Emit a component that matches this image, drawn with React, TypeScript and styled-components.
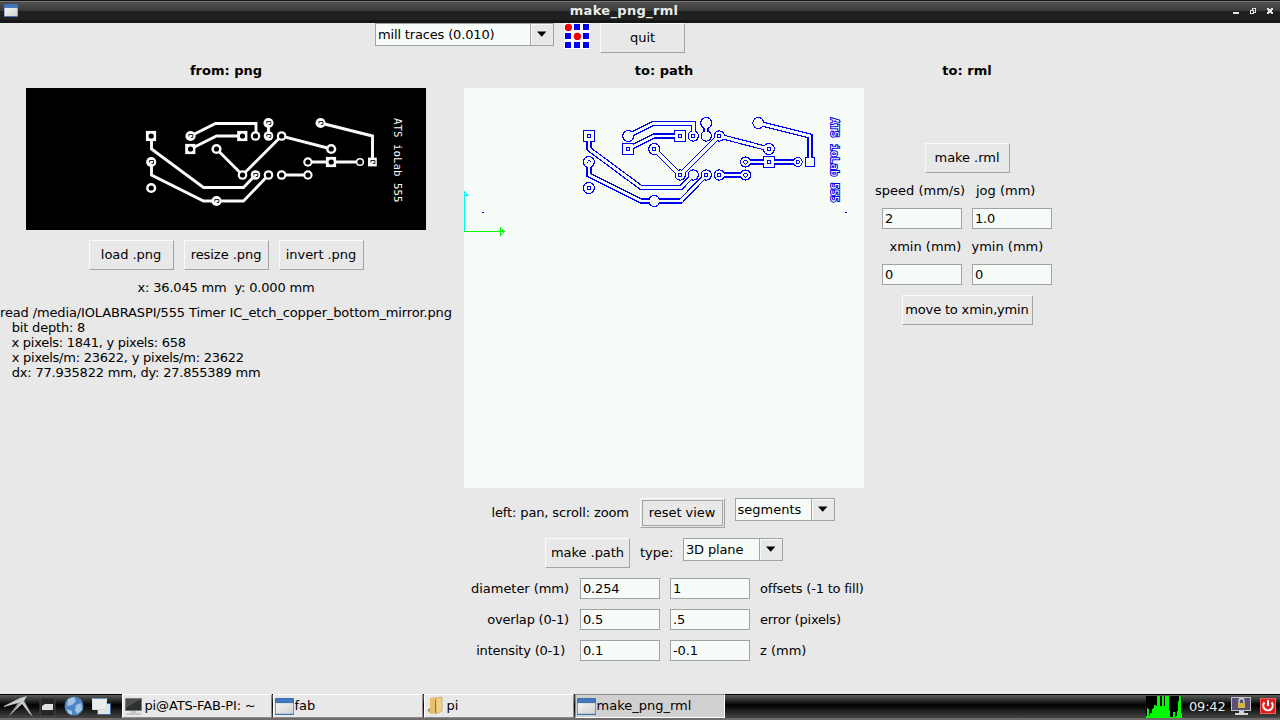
import React from "react";
import styled, { createGlobalStyle } from "styled-components";

const Global = createGlobalStyle`
  * { box-sizing: border-box; }
  body { margin: 0; background: #e8e8e8; overflow: hidden; }
`;
const Screen = styled.div`
  width: 1280px; height: 720px; display: flex; flex-direction: column;
  background: #e8e8e8; color: #000; font: 13px/15px "DejaVu Sans", sans-serif;
`;
const TitleBar = styled.header`
  height: 23px; flex: none; display: grid; grid-template-columns: 60px 1fr 92px; align-items: center;
  background: linear-gradient(#141414 0 1px, #777 1px 2px, #505050 2px, #3a3a3a 11px, #202020 11px, #202020 20px, #161616 20px);
`;
const WindowIcon = styled.svg<{ $w: number; $h: number }>`
  display: block; flex: none; width: ${(p) => p.$w}px; height: ${(p) => p.$h}px;
`;
const TitleSlot = styled.div`padding: 0 0 2px 4px;`;
const TitleText = styled.div`
  color: #e8ecea; font-weight: bold; text-align: center; letter-spacing: 0.32px; padding-bottom: 2px;
`;
const WindowControls = styled.svg`display: block; width: 60px; height: 23px; margin-left: 32px;`;
const Toolbar = styled.div`
  height: 37px; flex: none; display: flex; align-items: flex-start; gap: 10px; padding-left: 375px;
`;
const Button = styled.div<{ $w?: number; $focus?: boolean; $track?: number }>`
  width: ${(p) => p.$w ?? 85}px; height: 30px; flex: none; padding-bottom: 2px;
  display: flex; align-items: center; justify-content: center; white-space: nowrap;
  letter-spacing: ${(p) => p.$track ?? -0.05}px;
  border: 1px solid; border-color: #f8fcf8 #a0a4a2 #a0a4a2 #f8fcf8;
  ${(p) => p.$focus && "outline: 1px solid #a0a4a2; outline-offset: -3px;"}
`;
const ComboBox = styled.div<{ $w: number }>`
  width: ${(p) => p.$w}px; height: 23px; flex: none; display: flex; border: 1px solid #a0a4a2;
`;
const ComboValue = styled.div<{ $track: number }>`
  flex: 1; background: #f8fcf8; padding: 3px 2px; border-right: 1px solid #a0a4a2;
  letter-spacing: ${(p) => p.$track}px;
`;
const ComboArrow = styled.div`
  width: 22px; padding: 6px 0 0 5px; border: 1px solid #f8fcf8; border-width: 1px 0 0 1px;
`;
const Columns = styled.main`height: 634px; flex: none; display: flex;`;
const Column = styled.section<{ $w: number }>`
  width: ${(p) => p.$w}px; flex: none; display: flex; flex-direction: column; align-items: center;
`;
const Heading = styled.h2`
  margin: 0; height: 28px; padding: 3px 0 0; font: bold 13px/15px "DejaVu Sans", sans-serif;
`;
const Board = styled.svg`display: block; flex: none; width: 400px;`;
const Row = styled.div<{ $top?: number; $gap?: number }>`
  display: flex; gap: ${(p) => p.$gap ?? 10}px; margin-top: ${(p) => p.$top ?? 10}px;
`;
const ViewRow = styled(Row)`padding-right: 2px;`;
const Text = styled.div<{ $top?: number; $track?: number; $w?: number }>`
  white-space: pre; padding-top: ${(p) => p.$top ?? 0}px; letter-spacing: ${(p) => p.$track ?? 0}px;
  ${(p) => p.$w && `width: ${p.$w}px;`}
`;
const Report = styled.div`width: 452px; margin-top: 10px;`;
const Field = styled.div`
  width: 80px; height: 21px; padding: 2px 2px; border: 1px solid #a0a4a2; background: #f8fcf8;
  letter-spacing: -0.15px;
`;
const Params = styled.div`
  width: 412px; margin-top: 10px; display: grid; grid-template-columns: 105px 80px 80px 1fr;
  grid-auto-rows: 21px; gap: 10px; align-items: center; margin-left: 14px;
`;
const RightLabel = styled.div<{ $track: number }>`
  text-align: right; white-space: pre; padding-right: 1px; letter-spacing: ${(p) => p.$track}px;
`;
const Taskbar = styled.footer`
  height: 26px; flex: none; display: flex; align-items: flex-start;
  background: linear-gradient(#000 0 1px, #5a5c5a 1px, #303230 6px, #000 11px, #0a0c0a 13px, #444644 24px, #706c6c 24px);
`;
const Launchers = styled.svg`width: 122px; height: 26px; display: block; flex: none;`;
const Task = styled.div<{ $active?: boolean }>`
  width: 150px; height: 24px; margin-right: 1px; flex: none; display: flex; align-items: center;
  padding-left: 1px; border: 1px solid; border-color: #fff #8c8c8c #8c8c8c #fff;
  background: #e8e8e8;
  ${(p) => p.$active && "background: #d0d0d0; border-color: #8c8c8c #fff #fff #8c8c8c;"}
`;
const TaskLabel = styled.span<{ $track?: number }>`
  padding: 0 0 1px 0.5px; letter-spacing: ${(p) => p.$track ?? 0}px;
`;
const Tray = styled.div`margin-left: auto; display: flex; height: 24px; color: #e8ecea;`;
const Clock = styled.div`width: 43px; padding: 5px 0 0 7px; white-space: nowrap; letter-spacing: -0.2px;`;
const TraySvg = styled.svg`display: block; flex: none;`;

type Pad = { x: number; y: number; r: number; square?: boolean; hole: boolean };
const pads: Pad[] = [
  { x: 151, y: 136, r: 5, square: true, hole: true },
  { x: 190.3, y: 149, r: 5, square: true, hole: true },
  { x: 242.3, y: 136, r: 5, square: true, hole: true },
  { x: 331, y: 162, r: 5, square: true, hole: true },
  { x: 372.4, y: 162, r: 4.3, square: true, hole: false },
  { x: 190.3, y: 136, r: 5, hole: false },
  { x: 216.3, y: 149, r: 5, hole: true },
  { x: 151, y: 162, r: 5, hole: false },
  { x: 151, y: 188, r: 5, hole: true },
  { x: 216.3, y: 201, r: 5, hole: false },
  { x: 242.3, y: 175, r: 4.7, hole: true },
  { x: 255.3, y: 175, r: 4.7, hole: false },
  { x: 268.3, y: 175, r: 4.7, hole: true },
  { x: 281.4, y: 175, r: 4.7, hole: true },
  { x: 255.3, y: 136, r: 4.7, hole: true },
  { x: 268.3, y: 136, r: 4.7, hole: false },
  { x: 268.3, y: 123, r: 5, hole: false },
  { x: 281.4, y: 136, r: 4.7, hole: true },
  { x: 320.4, y: 123, r: 5, hole: false },
  { x: 331, y: 149, r: 5, hole: true },
  { x: 307.7, y: 162, r: 4.6, hole: true },
  { x: 359.8, y: 162, r: 4, hole: true },
  { x: 307.7, y: 175, r: 4.6, hole: true },
];
const traces =
  "M151 136V149L203 187.5H243L255 175M151 162V175L203 201H243L268 175M190 136L215 123.5H255.5V136" +
  "M190 149L216 136H242M216 149L242 175L281 136L331 149M320 123L372 136V162M268 123V136M307 162H360M281 175H307";

const PadShape = ({ pad, grow, fill }: { pad: Pad; grow: number; fill: string }) => {
  const r = pad.r + grow;
  return pad.square ? (
    <rect x={pad.x - r} y={pad.y - r} width={r * 2} height={r * 2} fill={fill} />
  ) : (
    <circle cx={pad.x + 0.2} cy={pad.y} r={r} fill={fill} />
  );
};

const SourceBoard = () => (
  <Board viewBox="26 88 400 142" height={142}>
    <rect x="26" y="88" width="400" height="142" fill="#000" />
    <path d={traces} transform="translate(.5 0)" fill="none" stroke="#f8fcf8" strokeWidth="2.9" />
    {pads.map((p, i) => (
      <g key={i}>
        <PadShape pad={p} grow={0.1} fill="#f8fcf8" />
        {p.hole ? (
          <circle cx={p.x + 0.2} cy={p.y} r="2.6" fill="#000" />
        ) : (
          <path d={`M${p.x - 1.5} ${p.y + 0.5}v-2h4v3h-2`} fill="none" stroke="#222" strokeWidth="1" />
        )}
      </g>
    ))}
    <text transform="translate(393.5 118) rotate(90)" fontFamily="DejaVu Sans Mono, monospace" fontSize="10.8" fill="#f8fcf8">
      ATS ioLab 555
    </text>
  </Board>
);

const PathBoard = () => (
  <Board viewBox="464 88 400 400" height={400} shapeRendering="crispEdges">
    <rect x="464" y="88" width="400" height="400" fill="#f8fcf8" />
    <g transform="translate(437.7 0)">
      <path d={traces} transform="translate(.3 0)" fill="none" stroke="#0000f0" strokeWidth="5.2" />
      {pads.map((p, i) => <PadShape key={i} pad={p} grow={1} fill="#0000f0" />)}
      <path d={traces} transform="translate(.3 0)" fill="none" stroke="#f8fcf8" strokeWidth="2.9" />
      {pads.map((p, i) => <PadShape key={i} pad={p} grow={-0.1} fill="#f8fcf8" />)}
      {pads.filter((p) => p.hole).map((p, i) => (
        <ellipse key={i} cx={p.x + 0.1} cy={p.y} rx="1.7" ry="2" fill="none" stroke="#0000f0" strokeWidth="1" />
      ))}
      <path d="M149.500 162.500h1M152.500 161.500h1M150.500 160.500h2" stroke="#0000f0" />
    </g>
    <text transform="translate(831.3 118) rotate(90)" fontFamily="DejaVu Sans Mono, monospace" fontSize="10.8"
      fill="#f8fcf8" stroke="#0000f0" strokeWidth="2" paintOrder="stroke">
      ATS ioLab 555
    </text>
    <path d="M482 212.500h2M845 212.500h2" stroke="#0000f0" />
    <path d="M464.500 231V191.500L468 195.500H464" fill="none" stroke="#00f8f8" />
    <path d="M464 231.500H504L500.500 227.500V235.500L504.500 231.500" fill="none" stroke="#00f800" />
  </Board>
);

const AppWindowIcon = ({ w, h }: { w: number; h: number }) => (
  <WindowIcon $w={w} $h={h} viewBox="0 0 20 20" preserveAspectRatio="none">
    <defs>
      <linearGradient id="pane" x1="0" y1="0" x2="1" y2="1">
        <stop offset="0" stopColor="#f4f4f2" />
        <stop offset="1" stopColor="#cfd2d0" />
      </linearGradient>
    </defs>
    <rect x="0" y="0" width="20" height="20" rx="1" fill="#3f70b0" />
    <rect x="0.7" y="6" width="18.6" height="12.6" fill="url(#pane)" />
    <rect x="1" y="1" width="18" height="4" fill="#4478bc" />
  </WindowIcon>
);

const TerminalIcon = () => (
  <WindowIcon $w={20} $h={20} viewBox="0 0 20 20">
    <rect x="1" y="2" width="17" height="13" rx="1" fill="#777" />
    <rect x="2" y="3" width="15" height="11" fill="#2c302e" />
    <path d="M2 3h15L2 12z" fill="#4b4f4d" />
    <path d="M7 15h5v2H7zM3 17h14v2H3z" fill="#c4c4c4" />
  </WindowIcon>
);
const FolderIcon = () => (
  <WindowIcon $w={20} $h={20} viewBox="0 0 20 20">
    <path d="M1 14l4 4 3-1V9z" fill="#999" />
    <path d="M4 2l6-1v16l-6 1z" fill="#e8bd6c" />
    <path d="M10 2l6-1v14l-6 3z" fill="#f1d08d" stroke="#c89b4b" strokeWidth=".7" />
    <path d="M9.500 4v13" stroke="#9c7430" strokeWidth="1" />
  </WindowIcon>
);

const Combo = ({ value, width, track = 0 }: { value: string; width: number; track?: number }) => (
  <ComboBox $w={width}>
    <ComboValue $track={track}>{value}</ComboValue>
    <ComboArrow>
      <svg width="10" height="6" viewBox="0 0 10 6" display="block"><path d="M0 0.500h9.400L4.700 5.800z" fill="#000" /></svg>
    </ComboArrow>
  </ComboBox>
);

const FabLogo = () => (
  <svg width="26" height="26" viewBox="0 0 26 26">
    <rect width="26" height="26" fill="#fff" />
    {[0, 1, 2].flatMap((r) =>
      [0, 1, 2].map((c) =>
        r === c && r < 2 ? (
          <circle key={`${r}${c}`} cx={4.4 + c * 9} cy={4.4 + r * 9} r="3.6" fill="#f00000" />
        ) : (
          <rect key={`${r}${c}`} x={1 + c * 9} y={1 + r * 9} width="6" height="6" fill="#0000f8" />
        ),
      ),
    )}
  </svg>
);

const report: [string, number][] = [
  ["read /media/IOLABRASPI/555 Timer IC_etch_copper_bottom_mirror.png", -0.138],
  ["   bit depth: 8", -0.2],
  ["   x pixels: 1841, y pixels: 658", -0.27],
  ["   x pixels/m: 23622, y pixels/m: 23622", -0.24],
  ["   dx: 77.935822 mm, dy: 27.855389 mm", -0.21],
];

const params: [string, string, string, string, number, number][] = [
  ["diameter (mm)", "0.254", "1", "offsets (-1 to fill)", -0.05, -0.2],
  ["overlap (0-1)", "0.5", ".5", "error (pixels)", -0.2, -0.18],
  ["intensity (0-1) ", "0.1", "-0.1", "z (mm)", -0.2, 0],
];

const cpu = [2, 10, 9, 2, 5, 5, 9, 10, 13, 13, 12, 22, 22, 22, 12, 12, 22, 22, 12, 22, 22, 22, 22, 8, 1, 1, 1, 6, 6, 1, 2, 7, 17, 22, 22, 5];

export default function App() {
  return (
    <Screen>
      <Global />
      <TitleBar>
        <TitleSlot><AppWindowIcon w={14} h={13} /></TitleSlot>
        <TitleText>make_png_rml</TitleText>
        <WindowControls viewBox="0 0 60 23" fill="none" stroke="#e0e4e2" shapeRendering="crispEdges">
          <path d="M13 13h6" strokeWidth="2" />
          <path d="M32.500 10V8.500h3v4h-1.500M30.500 10.500h3v3h-3z" strokeWidth="1" />
          <path d="M47 8h2v1h2V8h2v2h-1v2h1v2h-2v-1h-2v1h-2v-2h1v-2h-1z" fill="#e0e4e2" stroke="none" />
        </WindowControls>
      </TitleBar>
      <Toolbar>
        <Combo value="mill traces (0.010)" width={179} track={-0.16} />
        <FabLogo />
        <Button>quit</Button>
      </Toolbar>
      <Columns>
        <Column $w={452}>
          <Heading>from: png</Heading>
          <SourceBoard />
          <Row><Button>load .png</Button><Button>resize .png</Button><Button>invert .png</Button></Row>
          <Text $top={10} $track={-0.18}>x: 36.045 mm  y: 0.000 mm</Text>
          <Report>
            {report.map(([line, track]) => <Text key={line} $track={track}>{line}</Text>)}
          </Report>
        </Column>
        <Column $w={424}>
          <Heading>to: path</Heading>
          <PathBoard />
          <ViewRow>
            <Text $top={7} $track={-0.13} $w={138}>left: pan, scroll: zoom</Text>
            <Button $focus>reset view</Button>
            <Combo value="segments" width={100} />
          </ViewRow>
          <Row>
            <Button>make .path</Button>
            <Text $top={7} $w={33}>type:</Text>
            <Combo value="3D plane" width={100} track={-0.15} />
          </Row>
          <Params>
            {params.map(([left, a, b, right, leftTrack, rightTrack]) => (
              <React.Fragment key={left}>
                <RightLabel $track={leftTrack}>{left}</RightLabel>
                <Field>{a}</Field>
                <Field>{b}</Field>
                <Text $track={rightTrack}>{right}</Text>
              </React.Fragment>
            ))}
          </Params>
        </Column>
        <Column $w={182}>
          <Heading>to: rml</Heading>
          <Row $top={55}><Button>make .rml</Button></Row>
          <Row><Text $w={91}>speed (mm/s)</Text><Text $w={83}>jog (mm)</Text></Row>
          <Row><Field>2</Field><Field>1.0</Field></Row>
          <Row><Text $w={72}>xmin (mm)</Text><Text $w={73}>ymin (mm)</Text></Row>
          <Row><Field>0</Field><Field>0</Field></Row>
          <Row><Button $w={131} $track={-0.17}>move to xmin,ymin</Button></Row>
        </Column>
      </Columns>
      <Taskbar>
        <Launchers viewBox="0 0 122 26">
          <path d="M4 12L20 4 27 2 24 7 33 23 29 19 22 10 9 22 18 9 4 13z" fill="#c8cccb" />
          <path d="M24 7l6 11M20 8l-7 9" stroke="#777" strokeWidth="1" />
          <rect x="40" y="4" width="15" height="18" rx="2" fill="#252725" stroke="#484a48" />
          <path d="M42 12l3-2h8v6H42z" fill="#e0e2e0" />
          <circle cx="74" cy="12" r="9.500" fill="#4d87c4" />
          <path d="M68 5l6-2 2 4-4 4-5 1zM76 11l5-2 1 7-5 4-2-4zM67 15l5 2v4l-4-2z" fill="#a4c4e4" />
          <path d="M97.500 9.500h13v11h-13z" fill="#e4e4de" stroke="#416a9e" />
          <path d="M92.500 4.500h14v11h-14z" fill="#ecece6" stroke="#d2dced" />
          <path d="M93 4.500h13" stroke="#6a93c4" />
        </Launchers>
        <Task><TerminalIcon /><TaskLabel $track={-0.15}>pi@ATS-FAB-PI: ~</TaskLabel></Task>
        <Task><AppWindowIcon w={19} h={17} /><TaskLabel>fab</TaskLabel></Task>
        <Task><FolderIcon /><TaskLabel>pi</TaskLabel></Task>
        <Task $active><AppWindowIcon w={19} h={17} /><TaskLabel>make_png_rml</TaskLabel></Task>
        <Tray>
          <TraySvg width="36" height="24" viewBox="0 0 36 24" shapeRendering="crispEdges">
            <rect y="2" width="36" height="22" fill="#000" />
            {cpu.map((h, i) => <rect key={i} x={i} y={24 - h} width="1" height={h} fill="#00f800" />)}
          </TraySvg>
          <Clock>09:42</Clock>
          <TraySvg width="55" height="24" viewBox="0 0 55 24">
            <rect x="6" y="3" width="20" height="14" fill="#bfc1c0" />
            <rect x="7" y="4" width="18" height="12" fill="#5b5078" />
            <path d="M14 9V7a2.500 2.500 0 015 0v2" fill="none" stroke="#d8d8d8" strokeWidth="1.300" />
            <rect x="13" y="9" width="7" height="5" fill="#d9b43c" />
            <path d="M14 17h5v2h4v2H10v-2h4z" fill="#d4d6d4" />
            <rect x="35.500" y="4.500" width="15" height="15" fill="#d92020" stroke="#ef6060" />
            <path d="M39.500 8.500a4.700 4.700 0 107 0" fill="none" stroke="#fff" strokeWidth="2" />
            <path d="M43 6v6" stroke="#fff" strokeWidth="2" />
          </TraySvg>
        </Tray>
      </Taskbar>
    </Screen>
  );
}
